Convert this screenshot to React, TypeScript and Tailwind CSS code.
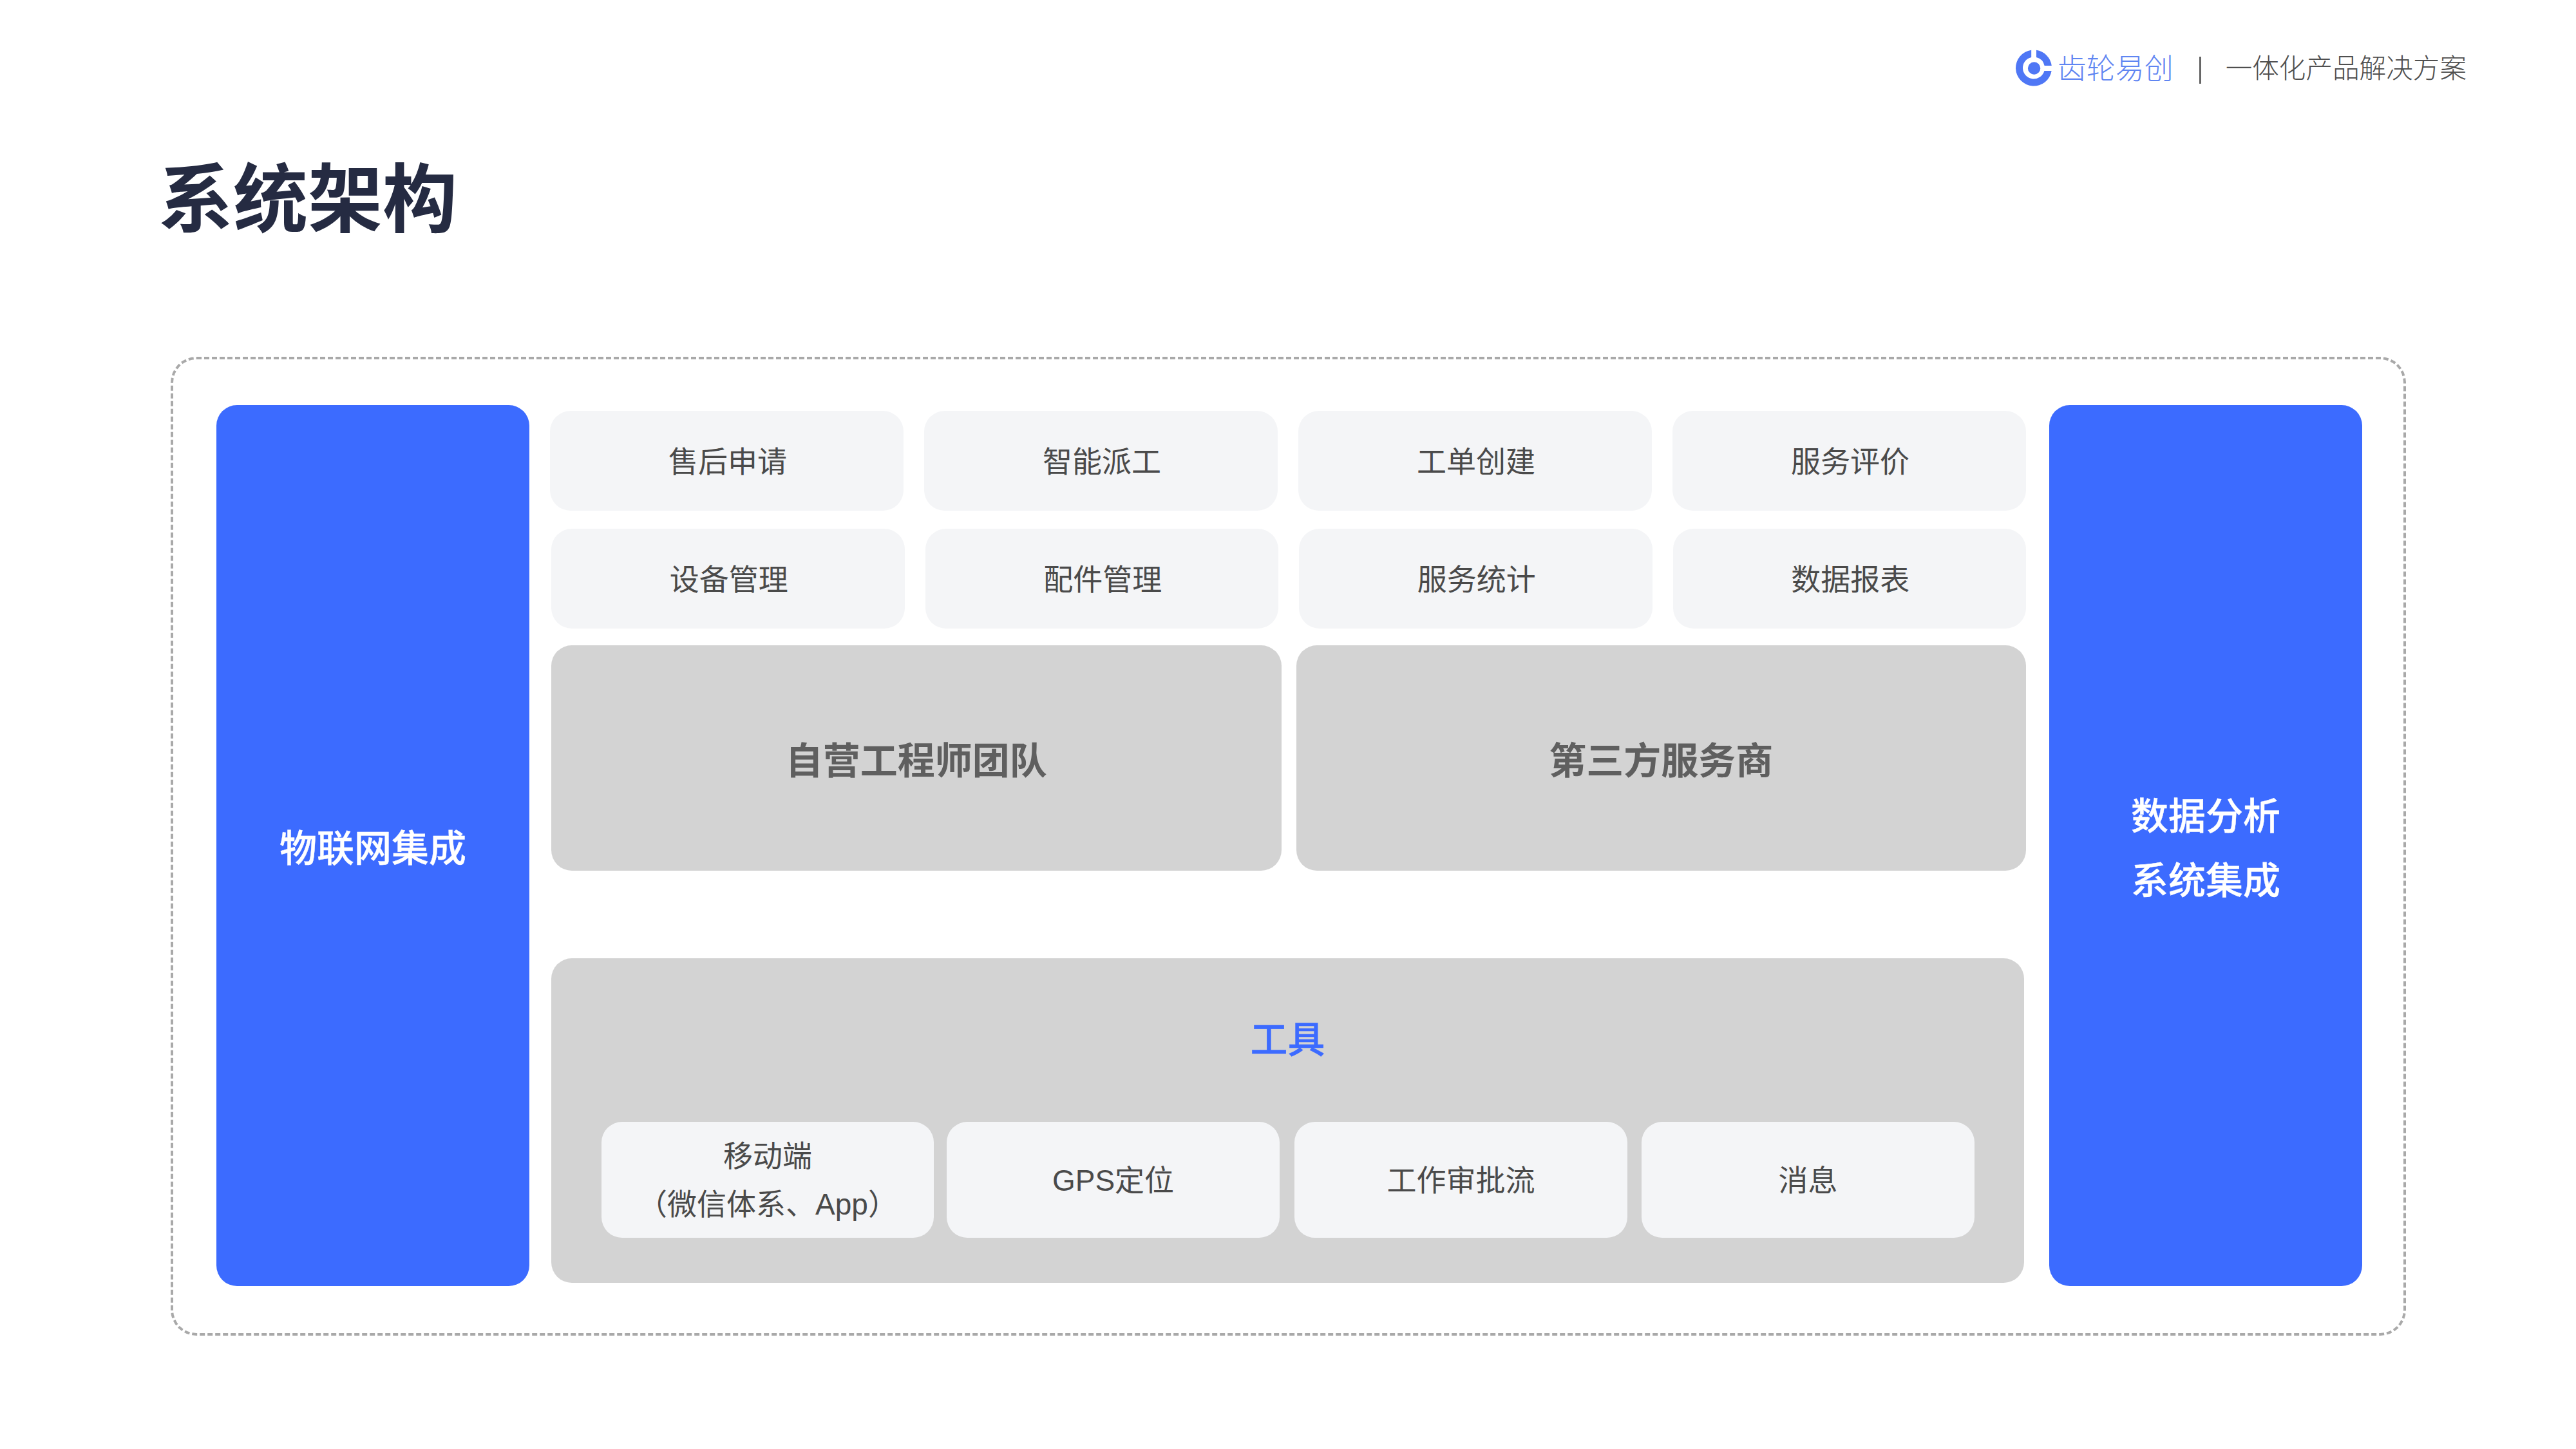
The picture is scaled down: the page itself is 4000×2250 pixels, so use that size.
const font = "font-['Noto_Sans_CJK_SC','Noto_Sans',sans-serif]";
const latinFont = "font-['Liberation_Sans','Noto_Sans_CJK_SC',sans-serif]";

function Card({ label }: { label: string }) {
  return (
    <div className="flex h-[155px] w-[549px] items-center justify-center rounded-[32px] bg-[#f4f5f7] pb-[5px] pl-[3px] text-[46px] text-[#4a4a4a]">
      {label}
    </div>
  );
}

function ToolCard({ className, children }: { className: string; children: React.ReactNode }) {
  return (
    <div className={`flex h-[180px] flex-col items-center justify-center rounded-[32px] bg-[#f4f5f7] pt-[2px] text-[46px] leading-[75px] text-[#4a4a4a] ${latinFont} ${className}`}>
      {children}
    </div>
  );
}

function Logo() {
  return (
    <svg width="56" height="57" viewBox="0 0 56 57" className="shrink-0">
      <path d="M24.2 0.76 A28 28 0 1 0 55.64 33 L44.4 33 A17 17 0 1 1 24.2 11.93 Z" fill="#4f77f5" />
      <path d="M32 0.79 A28 28 0 0 1 55.78 25 L44.64 25 A17 17 0 0 0 32 11.98 Z" fill="#4f77f5" />
      <circle cx="28.6" cy="29" r="9.7" fill="#4f77f5" />
    </svg>
  );
}

export default function App() {
  return (
    <div className={`flex h-[2250px] w-[4000px] flex-col bg-white ${font}`}>
      <header className="flex h-[210px] items-start justify-end pr-[170px] pt-[77px]">
        <div className="flex h-[57px] items-center">
          <Logo />
          <span className="mb-[4px] ml-[9px] text-[45px] font-light text-[#5f85f2]">齿轮易创</span>
          <span className="ml-[40px] mt-[6px] h-[42px] w-[3px] bg-[#666666]" />
          <span className="mb-[4px] ml-[38px] text-[41.6px] font-light text-[#4f4f4f]">一体化产品解决方案</span>
        </div>
      </header>
      <h1 className="ml-[246px] h-[344px] text-[116px] leading-[180px] font-bold text-[#252b42]">系统架构</h1>
      <main className="ml-[265px] flex h-[1520px] w-[3471px] rounded-[40px] border-[4px] border-dashed border-[#a9a9a9] pl-[67px] pt-[71px]">
        <div className="flex h-[1368px] w-[486px] items-center justify-center rounded-[32px] bg-[#3c6bff] text-[58px] font-medium text-white [-webkit-text-stroke:0.4px_#ffffff]">
          物联网集成
        </div>
        <div className="ml-[32px] w-[2292px] pt-[9px]">
          <div className="flex gap-[32px]">
            <Card label="售后申请" />
            <Card label="智能派工" />
            <Card label="工单创建" />
            <Card label="服务评价" />
          </div>
          <div className="ml-[2px] mt-[28px] flex gap-[32px]">
            <Card label="设备管理" />
            <Card label="配件管理" />
            <Card label="服务统计" />
            <Card label="数据报表" />
          </div>
          <div className="ml-[2px] mt-[26px] flex gap-[23px] text-[58px] font-semibold text-[#5f5f5f]">
            <div className="flex h-[350px] w-[1134px] items-center justify-center rounded-[32px] bg-[#d3d3d3]">自营工程师团队</div>
            <div className="flex h-[350px] w-[1134px] items-center justify-center rounded-[32px] bg-[#d3d3d3]">第三方服务商</div>
          </div>
          <section className="ml-[2px] mt-[136px] h-[504px] w-[2287px] rounded-[32px] bg-[#d3d3d3] pl-[78px] pt-[72px]">
            <div className="pr-[78px] text-center text-[58px] leading-[100px] font-medium text-[#3c6bff] [-webkit-text-stroke:0.4px_#3c6bff]">工具</div>
            <div className="mt-[82px] flex">
              <ToolCard className="w-[516px]">
                <span>移动端</span>
                <span>（微信体系、App）</span>
              </ToolCard>
              <ToolCard className="ml-[20px] w-[517px]">GPS定位</ToolCard>
              <ToolCard className="ml-[23px] w-[517px]">工作审批流</ToolCard>
              <ToolCard className="ml-[22px] w-[517px]">消息</ToolCard>
            </div>
          </section>
        </div>
        <div className="ml-[36px] flex h-[1368px] w-[486px] flex-col items-center justify-center rounded-[32px] bg-[#3c6bff] text-[58px] leading-[100px] font-medium text-white [-webkit-text-stroke:0.4px_#ffffff]">
          <span>数据分析</span>
          <span>系统集成</span>
        </div>
      </main>
    </div>
  );
}
